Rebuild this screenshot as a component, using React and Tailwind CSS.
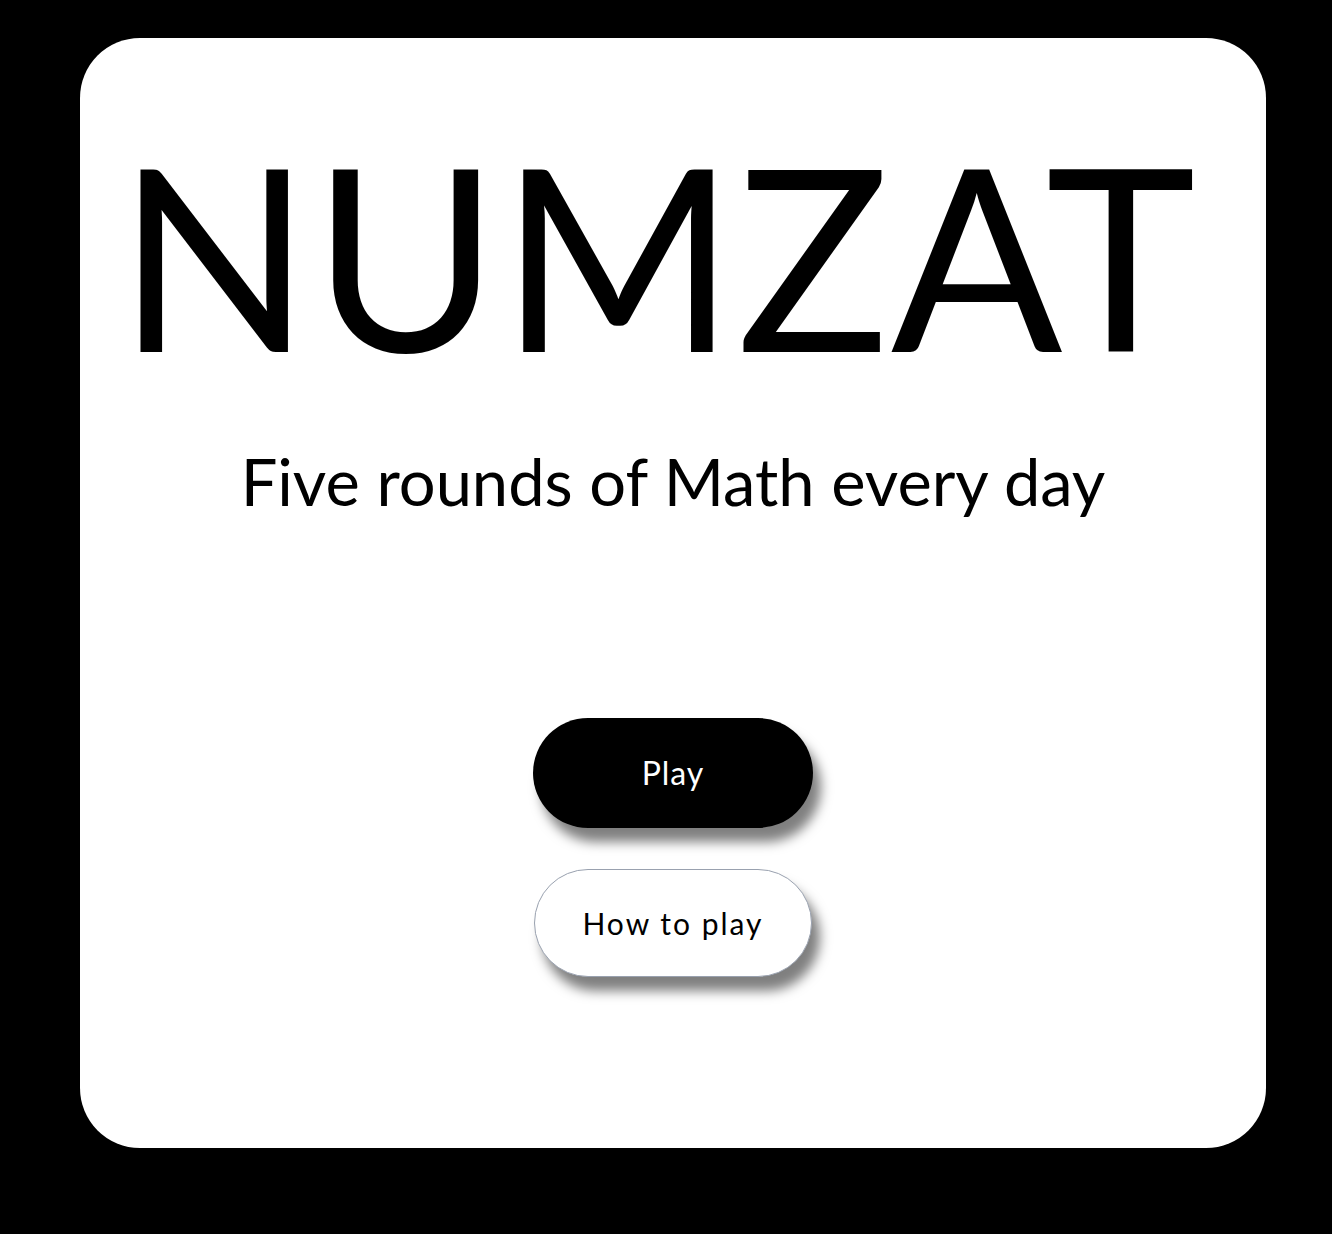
import React from 'react';

export default function App() {
  return (
    <div className="min-h-[1234px] w-full bg-black pt-[38px] pl-[80px] pr-[66px]" style={{ fontFamily: 'Lato, "Noto Sans", sans-serif' }}>
      <div className="flex h-[1110px] w-[1186px] flex-col items-center rounded-[60px] bg-white">
        <h1 className="mt-[51px] pr-[32px] text-[254px] font-normal leading-[330px] tracking-[1px] text-black">NUMZAT</h1>
        <p className="mt-[22px] text-[65px] leading-[80px] text-black">Five rounds of Math every day</p>
        <div className="mt-[197px] flex flex-col items-center gap-[41px]">
          <button className="h-[110px] w-[280px] rounded-full bg-black text-[32px] tracking-[1px] text-white shadow-[8px_14px_12px_rgba(0,0,0,0.5)]">
            Play
          </button>
          <button className="h-[108px] w-[278px] rounded-full border border-gray-400 bg-white text-[30px] tracking-[2px] text-black shadow-[8px_14px_12px_rgba(0,0,0,0.5)]">
            How to play
          </button>
        </div>
      </div>
    </div>
  );
}
